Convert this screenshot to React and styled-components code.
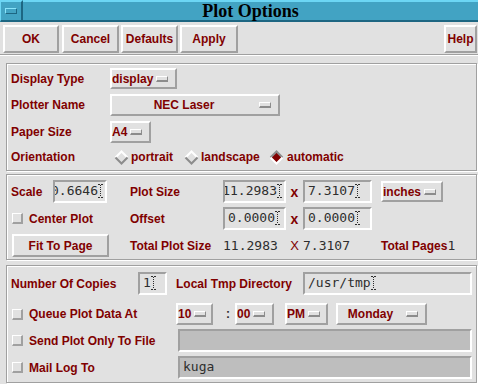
import styled, { createGlobalStyle } from 'styled-components';

const RED = '#800000';
const FACE = '#e1e1e1';
const SHADE = '#a0a0a0';
const INK = '#2e2e2e';

const GlobalStyle = createGlobalStyle`
  html, body {
    margin: 0;
    padding: 0;
    background: ${FACE};
    overflow: hidden;
  }
  * {
    box-sizing: border-box;
  }
`;

const Window = styled.div`
  display: flex;
  flex-direction: column;
  width: 478px;
  height: 384px;
  background: ${FACE};
  color: ${RED};
  font-family: 'Liberation Sans', Arial, sans-serif;
  font-size: 12px;
  font-weight: 700;
`;

const TitleBar = styled.div`
  display: flex;
  height: 22px;
  background: #42a3c3;
`;

const MenuButton = styled.div`
  display: flex;
  justify-content: center;
  align-items: center;
  width: 23px;
  height: 22px;
  padding-right: 1px;
  border-style: solid;
  border-width: 2px 2px 2px 1px;
  border-color: #6cd6f4 #1d6682 #1d6682 #6cd6f4;
`;

const MenuGlyph = styled.span`
  width: 12px;
  height: 6px;
  border: 1px solid;
  border-color: #8ae4fa #1d6682 #1d6682 #8ae4fa;
`;

const Title = styled.div`
  flex: 1;
  display: flex;
  justify-content: center;
  align-items: center;
  border-top: 2px solid #6cd6f4;
  border-bottom: 2px solid #1d6682;
  color: #000;
  font-family: 'Liberation Serif', 'Times New Roman', serif;
  font-size: 18px;
  font-weight: 700;
`;

const ActionBar = styled.div`
  display: flex;
  padding: 3px 1px 0 3px;
`;

const PushButton = styled.button`
  display: flex;
  justify-content: center;
  align-items: center;
  width: ${(p) => p.$w}px;
  height: ${(p) => p.$h || 28}px;
  margin-left: ${(p) => (p.$ml === 'auto' ? 'auto' : `${p.$ml || 0}px`)};
  padding: 0;
  border: 2px solid;
  border-color: #fff ${SHADE} ${SHADE} #fff;
  background: ${FACE};
  color: ${RED};
  font: inherit;
`;

const Separator = styled.div`
  height: 2px;
  margin-top: 1px;
  border-top: 1px solid ${SHADE};
  border-bottom: 1px solid #fff;
`;

const Frame = styled.div`
  display: flex;
  flex-direction: column;
  width: 471px;
  height: ${(p) => p.$h}px;
  margin: ${(p) => p.$mt}px 0 0 6px;
  padding: ${(p) => p.$pt}px 0 0 4px;
  border: 1px solid ${SHADE};
  box-shadow: inset 1px 1px 0 #fff, 1px 1px 0 #fff;
`;

const FormRow = styled.div`
  display: flex;
  align-items: center;
  height: ${(p) => p.$h}px;
  margin-top: ${(p) => p.$mt || 0}px;
`;

const Label = styled.span`
  flex-shrink: 0;
  width: ${(p) => (p.$w ? `${p.$w}px` : 'auto')};
  margin-left: ${(p) => p.$ml || 0}px;
  white-space: nowrap;
`;

const OptionMenu = styled.div`
  display: flex;
  align-items: center;
  flex-shrink: 0;
  width: ${(p) => p.$w}px;
  height: ${(p) => p.$h || 22}px;
  margin-left: ${(p) => p.$ml || 0}px;
  padding-right: 7px;
  border: 2px solid;
  border-color: #fff ${SHADE} ${SHADE} #fff;
`;

const OptionText = styled.span`
  flex: 1;
  text-align: center;
  white-space: nowrap;
`;

const Indicator = styled.span`
  flex-shrink: 0;
  width: 12px;
  height: 6px;
  margin-left: 3px;
  border: 1px solid;
  border-color: #fff #8c8c8c #8c8c8c #fff;
  border-bottom-width: 2px;
`;

const RadioItem = styled.div`
  display: flex;
  align-items: center;
  gap: 2px;
  flex-shrink: 0;
  width: ${(p) => (p.$w ? `${p.$w}px` : 'auto')};
  margin-left: ${(p) => p.$ml || 0}px;
`;

const SizeGrid = styled.div`
  display: grid;
  grid-template-columns: 119px 93px 63px 17px 69px 9px auto;
  grid-template-rows: 23px 23px 23px;
  row-gap: 4px;
  align-items: center;
`;

const Cell = styled.div`
  display: flex;
  align-items: center;
  height: 100%;
`;

const TextField = styled.div`
  display: flex;
  align-items: center;
  justify-content: ${(p) => (p.$scrolled ? 'flex-end' : 'flex-start')};
  flex-shrink: 0;
  width: ${(p) => p.$w}px;
  height: 23px;
  padding: 0 2px 2px 3px;
  border: 2px solid;
  border-color: ${SHADE} #fff #fff ${SHADE};
  background: ${(p) => (p.$dim ? '#bebebe' : FACE)};
  overflow: hidden;
  color: ${INK};
  font-family: 'DejaVu Sans Mono', 'Liberation Mono', monospace;
  font-size: 13px;
  font-weight: 400;
  white-space: nowrap;
`;

const Value = styled.span`
  color: ${INK};
  font-family: 'DejaVu Sans Mono', 'Liberation Mono', monospace;
  font-size: 13px;
  font-weight: 400;
  white-space: nowrap;
`;

const Times = styled.span`
  width: 100%;
  text-align: center;
  color: ${RED};
  font-size: ${(p) => (p.$big ? 13 : 14)}px;
  font-weight: ${(p) => (p.$big ? 400 : 700)};
`;

const CheckCell = styled.div`
  display: flex;
  align-items: center;
  flex-shrink: 0;
  width: ${(p) => (p.$w ? `${p.$w}px` : 'auto')};
  height: 100%;
`;

const CheckBox = styled.span`
  flex-shrink: 0;
  width: 11px;
  height: 11px;
  margin: 0 6px 0 1px;
  border: 2px solid;
  border-color: #fff ${SHADE} ${SHADE} #fff;
  border-top-width: 1px;
  border-left-width: 1px;
`;

const Colon = styled.span`
  flex-shrink: 0;
  width: 22px;
  padding-left: 13px;
  color: ${INK};
`;

const Diamond = ({ on }) => (
  <svg width="15" height="15" viewBox="0 0 15 15" style={{ flexShrink: 0 }}>
    <polygon points="7.5,1.5 13.5,7.5 7.5,13.5 1.5,7.5" fill={on ? RED : 'none'} />
    <polyline points="1.5,7.5 7.5,1.5 13.5,7.5" fill="none" stroke={on ? '#8c8c8c' : '#fff'} strokeWidth="2" />
    <polyline points="1.5,7.5 7.5,13.5 13.5,7.5" fill="none" stroke={on ? '#fff' : '#8c8c8c'} strokeWidth="2" />
  </svg>
);

const Cursor = () => (
  <svg width="5" height="14" viewBox="0 0 5 14" style={{ flexShrink: 0 }}>
    <path d="M0 0.5h2M3 0.5h2M0 13.5h2M3 13.5h2" stroke={INK} />
    <path d="M2.5 1v12" stroke={INK} strokeDasharray="1 1" />
  </svg>
);

const Field = ({ w, value, cursor, scrolled, dim }) => (
  <TextField $w={w} $scrolled={scrolled} $dim={dim}>
    <span>{value}</span>
    {cursor && <Cursor />}
  </TextField>
);

const Option = ({ w, h, ml, children }) => (
  <OptionMenu $w={w} $h={h} $ml={ml}>
    <OptionText>{children}</OptionText>
    <Indicator />
  </OptionMenu>
);

const App = () => {
  return (
    <>
      <GlobalStyle />
      <Window>
        <TitleBar>
          <MenuButton>
            <MenuGlyph />
          </MenuButton>
          <Title>Plot Options</Title>
        </TitleBar>

        <ActionBar>
          <PushButton $w={56}>OK</PushButton>
          <PushButton $w={57} $ml={3}>Cancel</PushButton>
          <PushButton $w={57} $ml={2}>Defaults</PushButton>
          <PushButton $w={58} $ml={2}>Apply</PushButton>
          <PushButton $w={33} $ml='auto'>Help</PushButton>
        </ActionBar>
        <Separator />

        <Frame $mt={7} $h={108} $pt={4}>
          <FormRow $h={21}>
            <Label $w={99}>Display Type</Label>
            <Option w={67} h={21}>display</Option>
          </FormRow>
          <FormRow $h={22} $mt={5}>
            <Label $w={99}>Plotter Name</Label>
            <Option w={170}>NEC Laser</Option>
          </FormRow>
          <FormRow $h={22} $mt={5}>
            <Label $w={99}>Paper Size</Label>
            <Option w={41}>A4</Option>
          </FormRow>
          <FormRow $h={20} $mt={4}>
            <Label $w={99}>Orientation</Label>
            <RadioItem $w={70} $ml={4}>
              <Diamond />
              portrait
            </RadioItem>
            <RadioItem $w={85}>
              <Diamond />
              landscape
            </RadioItem>
            <RadioItem>
              <Diamond on />
              <span style={{ marginLeft: 1 }}>automatic</span>
            </RadioItem>
          </FormRow>
        </Frame>

        <Frame $mt={3} $h={86} $pt={5}>
          <SizeGrid>
            <Cell>
              <Label $w={42}>Scale</Label>
              <Field w={54} value='0.6646' cursor scrolled />
            </Cell>
            <Label>Plot Size</Label>
            <Field w={63} value='11.2983' cursor scrolled />
            <Times>x</Times>
            <Field w={69} value='7.3107' cursor />
            <span />
            <Option w={62} h={21}>inches</Option>

            <CheckCell>
              <CheckBox />
              Center Plot
            </CheckCell>
            <Label>Offset</Label>
            <Field w={63} value='0.0000' cursor />
            <Times>x</Times>
            <Field w={69} value='0.0000' cursor />
            <span />
            <span />

            <Cell>
              <PushButton $w={97} $h={23} $ml={1}>Fit To Page</PushButton>
            </Cell>
            <Label>Total Plot Size</Label>
            <Value>11.2983</Value>
            <Times $big>X</Times>
            <Value>7.3107</Value>
            <span />
            <Cell>
              Total Pages<Value>1</Value>
            </Cell>
          </SizeGrid>
        </Frame>

        <Frame $mt={5} $h={118} $pt={6}>
          <FormRow $h={23}>
            <Label $w={127}>Number Of Copies</Label>
            <Field w={29} value='1' cursor />
            <Label $w={127} $ml={9}>Local Tmp Directory</Label>
            <Field w={169} value='/usr/tmp' cursor />
          </FormRow>
          <FormRow $h={22} $mt={8}>
            <CheckCell $w={165}>
              <CheckBox />
              Queue Plot Data At
            </CheckCell>
            <Option w={37}>10</Option>
            <Colon>:</Colon>
            <Option w={39}>00</Option>
            <Option w={43} ml={11}>PM</Option>
            <Option w={91} ml={8}>Monday</Option>
          </FormRow>
          <FormRow $h={23} $mt={4}>
            <CheckCell $w={167}>
              <CheckBox />
              Send Plot Only To File
            </CheckCell>
            <Field w={294} value='' dim />
          </FormRow>
          <FormRow $h={23} $mt={4}>
            <CheckCell $w={167}>
              <CheckBox />
              Mail Log To
            </CheckCell>
            <Field w={294} value='kuga' dim />
          </FormRow>
        </Frame>
      </Window>
    </>
  );
};

export default App;
